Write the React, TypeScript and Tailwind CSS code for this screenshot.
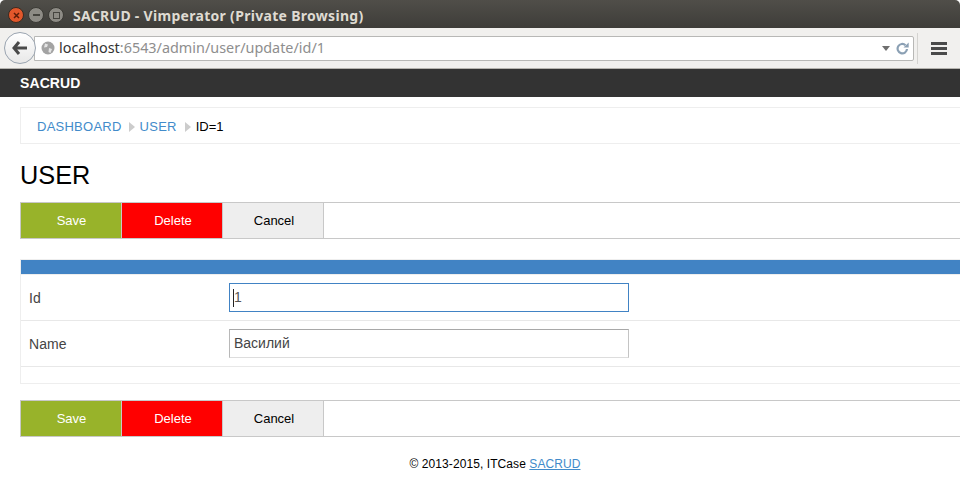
const sans = "font-['Liberation_Sans',Arial,sans-serif]";

function ActionBar() {
  return (
    <div className="flex h-[37px] border-y border-l border-[#c8c8c8]">
      <button className="w-[100px] bg-[#98b32a] pl-[1px] text-[13px] text-white">Save</button>
      <button className="w-[101px] border-l border-[#c8c8c8] bg-[#ff0000] pl-[2px] text-[13px] text-white">Delete</button>
      <button className="w-[102px] border-x border-[#c8c8c8] bg-[#eeeeee] pl-[2px] text-[13px] text-black">Cancel</button>
    </div>
  );
}

function TitleBar() {
  return (
    <div className="flex h-[28px] items-center rounded-t-[5px] bg-gradient-to-b from-[#504e49] to-[#3e3d39] pl-[8px] pt-[2px]">
      <div className="flex items-center gap-[4px]">
        <span className="flex h-[16px] w-[16px] items-center justify-center rounded-full border border-[#3a2a20] bg-[#e2572b]">
          <svg width="7" height="7" viewBox="0 0 7 7"><path d="M1 1l5 5M6 1l-5 5" stroke="#5a1c08" strokeWidth="1.5" /></svg>
        </span>
        <span className="flex h-[16px] w-[16px] items-center justify-center rounded-full border border-[#3a3934] bg-[#8d8b85]">
          <span className="h-[2px] w-[7px] bg-[#45443f]" />
        </span>
        <span className="flex h-[16px] w-[16px] items-center justify-center rounded-full border border-[#3a3934] bg-[#8d8b85]">
          <span className="h-[7px] w-[7px] border border-[#45443f]" />
        </span>
      </div>
      <span className="ml-[9px] font-['Noto_Sans','Open_Sans',sans-serif] text-[14px] font-bold tracking-[0.3px] text-[#dfdbd2]">
        SACRUD - Vimperator (Private Browsing)
      </span>
    </div>
  );
}

function Toolbar() {
  return (
    <div className="flex h-[41px] items-center border-b border-[#b5b3ae] bg-[#f1f0ee] pl-[4px]">
      <div className="z-10 flex h-[32px] w-[32px] items-center justify-center rounded-full border border-[#9aa4b0] bg-gradient-to-b from-white to-[#e8e8e8]">
        <svg width="16" height="14" viewBox="0 0 16 14"><path d="M7 1L2 7l5 6M2.5 7H15" fill="none" stroke="#4a4a4a" strokeWidth="3" /></svg>
      </div>
      <div className="-ml-[2px] flex h-[25px] w-[880px] items-center rounded-r-[2px] border border-[#b8b8b6] bg-white pl-[6px] pr-[4px]">
        <svg width="14" height="14" viewBox="0 0 14 14" className="shrink-0">
          <circle cx="7" cy="7" r="6.5" fill="#a3a3a3" />
          <path d="M4 2.5l3 1-1 2.5-3 .5zM8 7l3 1-1.5 4-2-1z" fill="#e4e4e4" />
        </svg>
        <span className="ml-[4px] font-['Noto_Sans','Open_Sans',sans-serif] text-[14.4px] text-[#8e8e8e]">
          <span className="text-[#333]">localhost</span>:6543/admin/user/update/id/1
        </span>
        <div className="ml-auto flex items-center gap-[6px]">
          <svg width="8" height="5" viewBox="0 0 8 5"><path d="M0 0h8L4 5z" fill="#6f6f6f" /></svg>
          <svg width="13" height="13" viewBox="0 0 13 13">
            <path d="M9.5 3.2A4.7 4.7 0 1 0 11 7" fill="none" stroke="#8ba0b4" strokeWidth="2.2" />
            <path d="M7.5 5.5h5.2V0.5z" fill="#8ba0b4" />
          </svg>
        </div>
      </div>
      <div className="ml-[3px] h-[31px] w-px bg-[#d4d3d0]" />
      <div className="ml-[13px] flex w-[16px] flex-col gap-[2px]">
        <span className="h-[3px] bg-[#4a4a4a]" />
        <span className="h-[3px] bg-[#4a4a4a]" />
        <span className="h-[3px] bg-[#4a4a4a]" />
      </div>
    </div>
  );
}

export default function App() {
  return (
    <div className={`h-[485px] w-[960px] overflow-hidden bg-white ${sans}`}>
      <TitleBar />
      <Toolbar />
      <div className="flex h-[28px] items-center bg-[#333333] pl-[20px] text-[14px] font-bold tracking-[0.1px] text-white">SACRUD</div>

      <div className="pl-[20px]">
        {/* breadcrumbs */}
        <div className="mt-[10px] flex h-[37px] items-center border-y border-l border-[#eeeeee] pl-[16px] pt-[2px] text-[13px]">
          <a className="tracking-[0.25px] text-[#428bca]">DASHBOARD</a>
          <span className="ml-[7px] mr-[5px] h-0 w-0 border-y-[5px] border-l-[6px] border-y-transparent border-l-[#cccccc]" />
          <a className="tracking-[0.25px] text-[#428bca]">USER</a>
          <span className="ml-[8px] mr-[5px] h-0 w-0 border-y-[5px] border-l-[6px] border-y-transparent border-l-[#cccccc]" />
          <span className="text-black">ID=1</span>
        </div>

        <h1 className="mt-[16px] mb-[12px] text-[25.3px] leading-[30px] text-black">USER</h1>

        <ActionBar />

        {/* form */}
        <div className="mt-[20px] border-y border-l border-[#eeeeee]">
          <div className="h-[14px] bg-[#4183c4]" />
          <div className="h-px bg-[#eeeeee]" />
          <div className="flex h-[46px] items-center border-b border-[#e8e8e8] pl-[8px]">
            <label className="w-[200px] pt-[1px] text-[14px] tracking-[0.1px] text-[#444444]">Id</label>
            <div className="relative">
              <input
                readOnly
                defaultValue="1"
                className="block h-[29px] w-[400px] border border-[#4183c4] pb-[1px] pl-[4px] text-[14px] text-[#555555] outline-none"
              />
              <span className="absolute left-[4px] top-[6px] h-[18px] w-px bg-[#222222]" />
            </div>
          </div>
          <div className="flex h-[46px] items-center border-b border-[#e8e8e8] pl-[8px]">
            <label className="w-[200px] pt-[1px] text-[14px] tracking-[0.1px] text-[#444444]">Name</label>
            <input
              readOnly
              defaultValue="Василий"
              className="h-[29px] w-[400px] border border-t-[#a8a8a8] border-l-[#b8b8b8] border-r-[#c4c4c4] border-b-[#dddddd] pb-[2px] pl-[4px] text-[14px] text-[#444444] outline-none"
            />
          </div>
          <div className="h-[16px]" />
        </div>

        <div className="mt-[16px]">
          <ActionBar />
        </div>
      </div>

      <p className="mt-[18px] pl-[30px] text-center text-[12px] tracking-[0.08px] text-black">
        © 2013-2015, ITCase <a className="text-[#428bca] underline">SACRUD</a>
      </p>
    </div>
  );
}
